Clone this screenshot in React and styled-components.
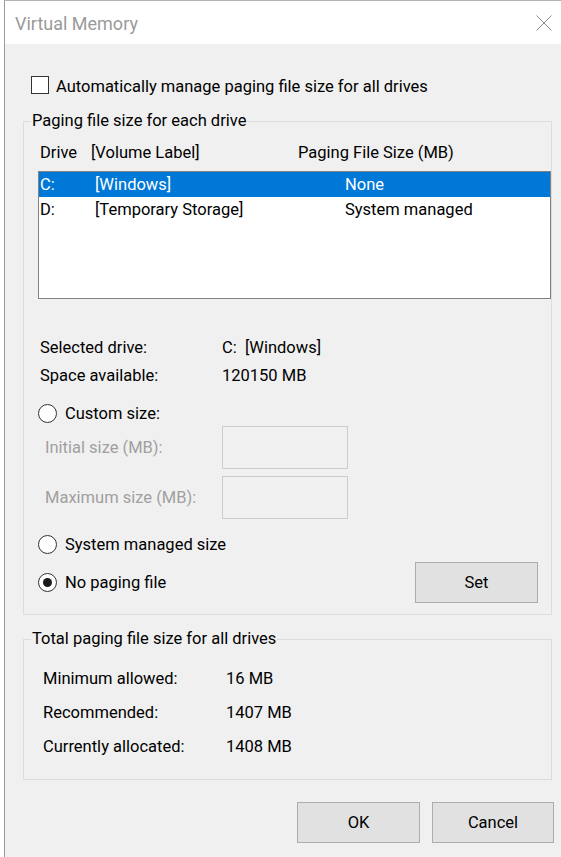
import React from "react";
import styled, { createGlobalStyle } from "styled-components";

const GlobalStyle = createGlobalStyle`
  html, body {
    margin: 0;
    padding: 0;
    background: #ffffff;
    overflow: hidden;
  }
  body {
    font-family: "Segoe UI", Roboto, "Noto Sans", sans-serif;
  }
`;

const Window = styled.div`
  margin-left: 4px;
  width: 557px;
  height: 900px;
  border-left: 1px solid #9a9a9a;
  border-top: 1px solid #b4b4b4;
  background: #f0f0f0;
  font-size: 16.5px;
  color: #000;
`;

const TitleBar = styled.div`
  height: 43px;
  background: #fff;
  display: flex;
  align-items: center;
  justify-content: space-between;
  padding: 0 10px 0 10px;
`;

const Title = styled.span`
  font-size: 18px;
  color: #9a9a9a;
  margin-top: 2px;
`;

const Close = styled.button`
  border: 0;
  background: none;
  padding: 0;
  width: 16px;
  height: 16px;
  display: flex;
  margin-top: 1px;
`;

const Body = styled.div`
  padding: 31px 8px 0 18px;
`;

const CheckRow = styled.label`
  display: flex;
  align-items: center;
  gap: 7px;
  height: 20px;
  margin-left: 8px;
  padding-top: 1px;
`;

const Box = styled.span`
  width: 16px;
  height: 16px;
  border: 1px solid #333;
  background: #fff;
  margin-top: -2px;
`;

const Group = styled.fieldset`
  margin: ${(p) => p.$top}px 0 0 0;
  width: 529px;
  box-sizing: border-box;
  border: 1px solid #dcdcdc;
  padding: ${(p) => p.$pad};
`;

const Legend = styled.legend`
  margin-left: ${(p) => p.$ml}px;
  padding: 0 1px;
  line-height: 22px;
`;

const Columns = styled.div`
  display: grid;
  grid-template-columns: ${(p) => p.$cols};
  align-items: center;
  height: ${(p) => p.$h}px;
  padding-left: ${(p) => p.$pl || 0}px;
  margin-top: ${(p) => p.$mt || 0}px;
`;

const ListBox = styled.div`
  margin-top: 9px;
  height: 128px;
  box-sizing: border-box;
  border: 1px solid #828282;
  background: #fff;
`;

const ListRow = styled.div`
  display: grid;
  grid-template-columns: 55px 250px 1fr;
  align-items: center;
  height: 25px;
  padding-left: 1px;
  background: ${(p) => (p.$selected ? "#0078d7" : "transparent")};
  color: ${(p) => (p.$selected ? "#fff" : "#000")};
`;

const RadioRow = styled.label`
  display: flex;
  align-items: center;
  gap: 8px;
  height: 20px;
  margin-top: ${(p) => p.$mt || 0}px;
`;

const Circle = styled.span`
  width: 17px;
  height: 17px;
  border-radius: 50%;
  border: 1px solid #333;
  background: #fff;
  display: flex;
  align-items: center;
  justify-content: center;
  &::after {
    content: "";
    width: 9px;
    height: 9px;
    border-radius: 50%;
    background: ${(p) => (p.$checked ? "#1a1a1a" : "transparent")};
  }
`;

const SizeGrid = styled.div`
  display: grid;
  grid-template-columns: 177px 126px;
  row-gap: 7px;
  align-items: center;
  padding-left: 7px;
  margin-top: 3px;
  color: #a0a0a0;
`;

const TextBox = styled.div`
  height: 43px;
  box-sizing: border-box;
  border: 1px solid #cccccc;
  background: #f0f0f0;
`;

const LastRow = styled.div`
  display: flex;
  align-items: center;
  justify-content: space-between;
  margin-top: 8px;
  padding-right: 13px;
`;

const Button = styled.button`
  width: ${(p) => p.$w}px;
  height: 41px;
  box-sizing: border-box;
  border: 1px solid #adadad;
  background: #e1e1e1;
  font: inherit;
  color: #000;
  padding: 0;
`;

const Footer = styled.div`
  display: flex;
  justify-content: flex-end;
  gap: 12px;
  margin-top: 22px;
`;

export default function App() {
  return (
    <>
      <GlobalStyle />
      <Window>
        <TitleBar>
          <Title>Virtual Memory</Title>
          <Close aria-label="Close">
            <svg width="16" height="16" viewBox="0 0 16 16">
              <path d="M0.5 0.5L15.5 15.5M15.5 0.5L0.5 15.5" stroke="#8a8a8a" strokeWidth="1" />
            </svg>
          </Close>
        </TitleBar>
        <Body>
          <CheckRow>
            <Box />
            Automatically manage paging file size for all drives
          </CheckRow>

          <Group $top={14} $pad="0 0 11px 14px">
            <Legend $ml={-7}>Paging file size for each drive</Legend>
            <Columns $cols="51px 207px 1fr" $h={20} $pl={2} $mt={10}>
              <span>Drive</span>
              <span>[Volume Label]</span>
              <span>Paging File Size (MB)</span>
            </Columns>
            <ListBox>
              <ListRow $selected>
                <span>C:</span>
                <span>[Windows]</span>
                <span>None</span>
              </ListRow>
              <ListRow>
                <span>D:</span>
                <span>[Temporary Storage]</span>
                <span>System managed</span>
              </ListRow>
            </ListBox>

            <Columns $cols="182px 1fr" $h={28} $pl={2} $mt={34}>
              <span>Selected drive:</span>
              <span>C:&nbsp; [Windows]</span>
            </Columns>
            <Columns $cols="182px 1fr" $h={28} $pl={2}>
              <span>Space available:</span>
              <span>120150 MB</span>
            </Columns>

            <RadioRow $mt={14}>
              <Circle />
              Custom size:
            </RadioRow>
            <SizeGrid>
              <span>Initial size (MB):</span>
              <TextBox />
              <span>Maximum size (MB):</span>
              <TextBox />
            </SizeGrid>

            <RadioRow $mt={15}>
              <Circle />
              System managed size
            </RadioRow>
            <LastRow>
              <RadioRow>
                <Circle $checked />
                No paging file
              </RadioRow>
              <Button $w={123}>Set</Button>
            </LastRow>
          </Group>

          <Group $top={13} $pad="11px 0 16px 19px">
            <Legend $ml={-12}>Total paging file size for all drives</Legend>
            <Columns $cols="183px 1fr" $h={34}>
              <span>Minimum allowed:</span>
              <span>16 MB</span>
            </Columns>
            <Columns $cols="183px 1fr" $h={34}>
              <span>Recommended:</span>
              <span>1407 MB</span>
            </Columns>
            <Columns $cols="183px 1fr" $h={34}>
              <span>Currently allocated:</span>
              <span>1408 MB</span>
            </Columns>
          </Group>

          <Footer>
            <Button $w={123}>OK</Button>
            <Button $w={122}>Cancel</Button>
          </Footer>
        </Body>
      </Window>
    </>
  );
}
